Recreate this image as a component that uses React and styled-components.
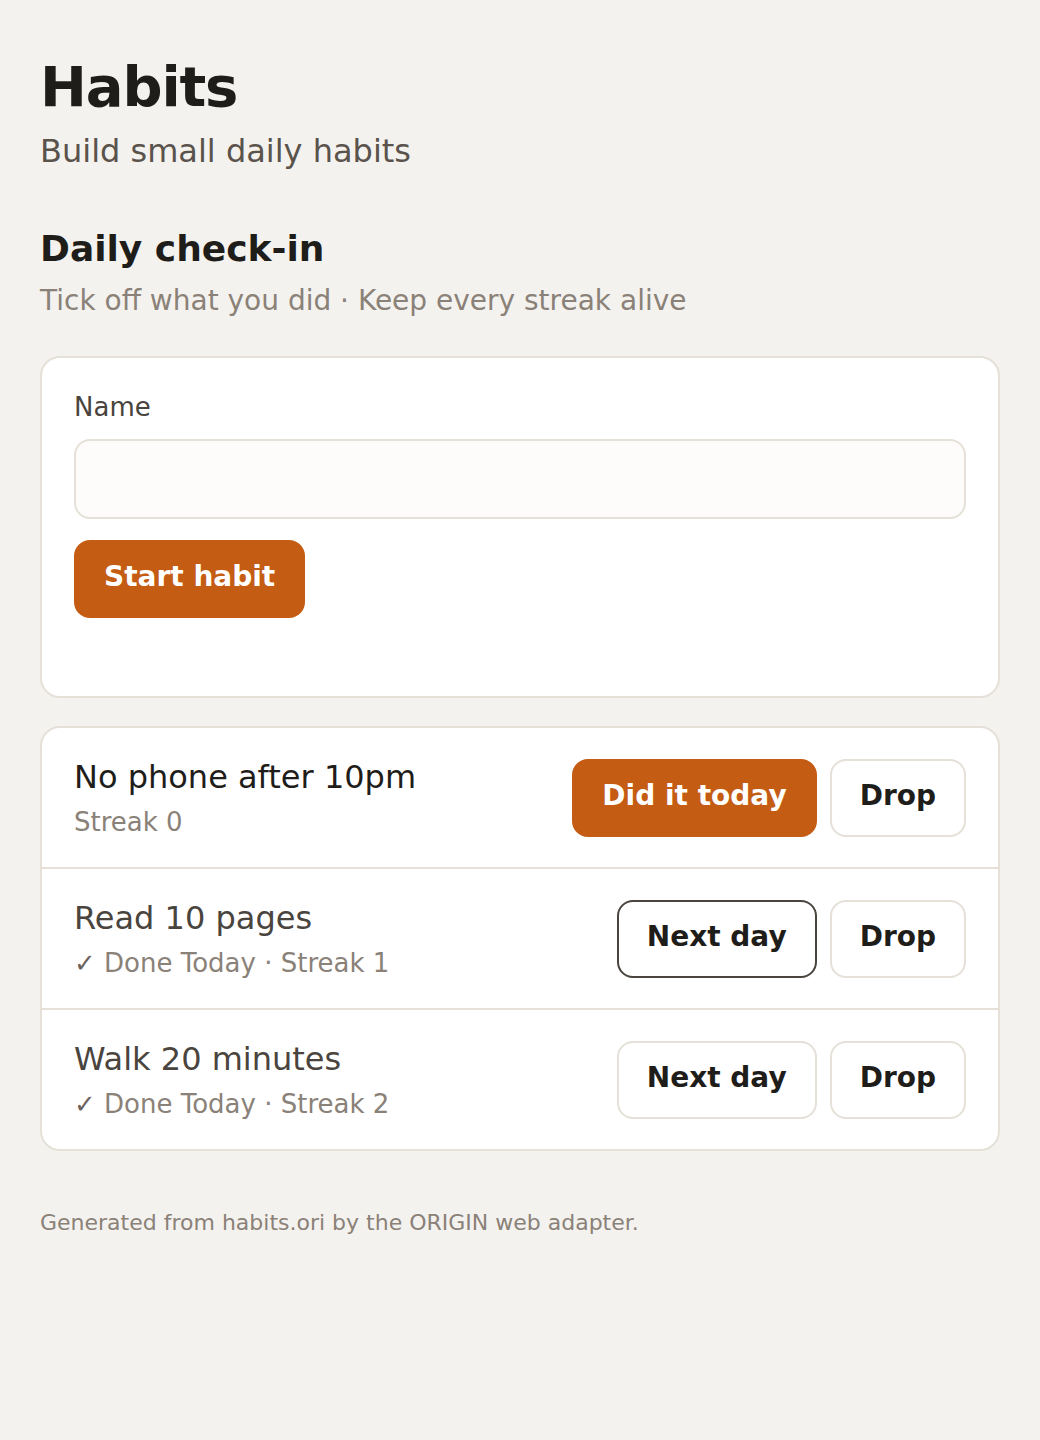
import React from 'react';
import styled, { createGlobalStyle } from 'styled-components';

const GlobalStyle = createGlobalStyle`
  * { box-sizing: border-box; }
  body {
    margin: 0;
    background: #f4f2ee;
    font-family: "DejaVu Sans", "Liberation Sans", sans-serif;
    color: #1f1d1a;
  }
`;

const Page = styled.div`
  padding: 56px 40px 80px;
`;

const Title = styled.h1`
  margin: 0;
  font-size: 56px;
  line-height: 62px;
  font-weight: 700;
  letter-spacing: -0.02em;
  color: #1f1d1a;
`;

const Subtitle = styled.p`
  margin: 13px 0 0;
  font-size: 32px;
  line-height: 40px;
  color: #5a534c;
`;

const SectionTitle = styled.h2`
  margin: 56px 0 0;
  font-size: 36px;
  line-height: 44px;
  font-weight: 700;
  color: #1f1d1a;
`;

const SectionHint = styled.p`
  margin: 12px 0 0;
  font-size: 28px;
  line-height: 36px;
  color: #8a8178;
`;

const Card = styled.div`
  margin-top: ${p => p.$top || 0}px;
  background: #fff;
  border: 2px solid #e5e0d8;
  border-radius: 20px;
  overflow: hidden;
`;

const Form = styled.form`
  display: flex;
  flex-direction: column;
  align-items: flex-start;
  padding: 32px 32px 78px;
`;

const Label = styled.label`
  font-size: 26px;
  line-height: 34px;
  color: #4a443e;
`;

const Input = styled.input`
  margin-top: 15px;
  width: 100%;
  height: 80px;
  border: 2px solid #e5e0d8;
  border-radius: 16px;
  background: #fdfcfa;
  font: inherit;
  font-size: 28px;
  padding: 0 24px;
  outline: none;
`;

const Button = styled.button`
  height: 78px;
  padding: 0 28px 6px;
  border-radius: 16px;
  border: 2px solid ${p => p.$primary ? '#c55c14' : p.$focused ? '#4a443e' : '#e5e0d8'};
  background: ${p => p.$primary ? '#c55c14' : '#fff'};
  color: ${p => p.$primary ? '#fff' : '#1f1d1a'};
  font-family: "DejaVu Sans", "Liberation Sans", sans-serif;
  font-size: 28px;
  font-weight: 700;
  white-space: nowrap;
  cursor: pointer;
`;

const SubmitButton = styled(Button)`
  margin-top: 21px;
`;

const Row = styled.div`
  display: flex;
  align-items: center;
  justify-content: space-between;
  padding: 30px 32px 29px;
  border-bottom: 2px solid #e5e0d8;
  &:last-child { border-bottom: none; }
`;

const Info = styled.div`
  display: flex;
  flex-direction: column;
  gap: 10px;
`;

const HabitName = styled.div`
  font-size: 32px;
  line-height: 38px;
  color: ${p => p.$done ? '#4a443e' : '#1f1d1a'};
`;

const Meta = styled.div`
  font-size: 26px;
  line-height: 32px;
  color: #8a8178;
`;

const Check = styled.span`
  color: #6b635b;
`;

const Actions = styled.div`
  display: flex;
  gap: 13px;
`;

const Footer = styled.p`
  margin: 57px 0 0;
  font-size: 22px;
  line-height: 30px;
  color: #8a8178;
`;

const habits = [
  { name: 'No phone after 10pm', streak: 0, done: false },
  { name: 'Read 10 pages', streak: 1, done: true, focused: true },
  { name: 'Walk 20 minutes', streak: 2, done: true },
];

export default function App() {
  return (
    <Page>
      <GlobalStyle />
      <Title>Habits</Title>
      <Subtitle>Build small daily habits</Subtitle>
      <SectionTitle>Daily check-in</SectionTitle>
      <SectionHint>Tick off what you did · Keep every streak alive</SectionHint>

      <Card $top={37}>
        <Form onSubmit={e => e.preventDefault()}>
          <Label htmlFor="habit-name">Name</Label>
          <Input id="habit-name" />
          <SubmitButton $primary type="submit">Start habit</SubmitButton>
        </Form>
      </Card>

      <Card $top={28}>
        {habits.map(h => (
          <Row key={h.name}>
            <Info>
              <HabitName $done={h.done}>{h.name}</HabitName>
              <Meta>
                {h.done ? <><Check>✓</Check> Done Today · </> : null}
                Streak {h.streak}
              </Meta>
            </Info>
            <Actions>
              {h.done
                ? <Button $focused={h.focused}>Next day</Button>
                : <Button $primary>Did it today</Button>}
              <Button>Drop</Button>
            </Actions>
          </Row>
        ))}
      </Card>

      <Footer>Generated from habits.ori by the ORIGIN web adapter.</Footer>
    </Page>
  );
}
